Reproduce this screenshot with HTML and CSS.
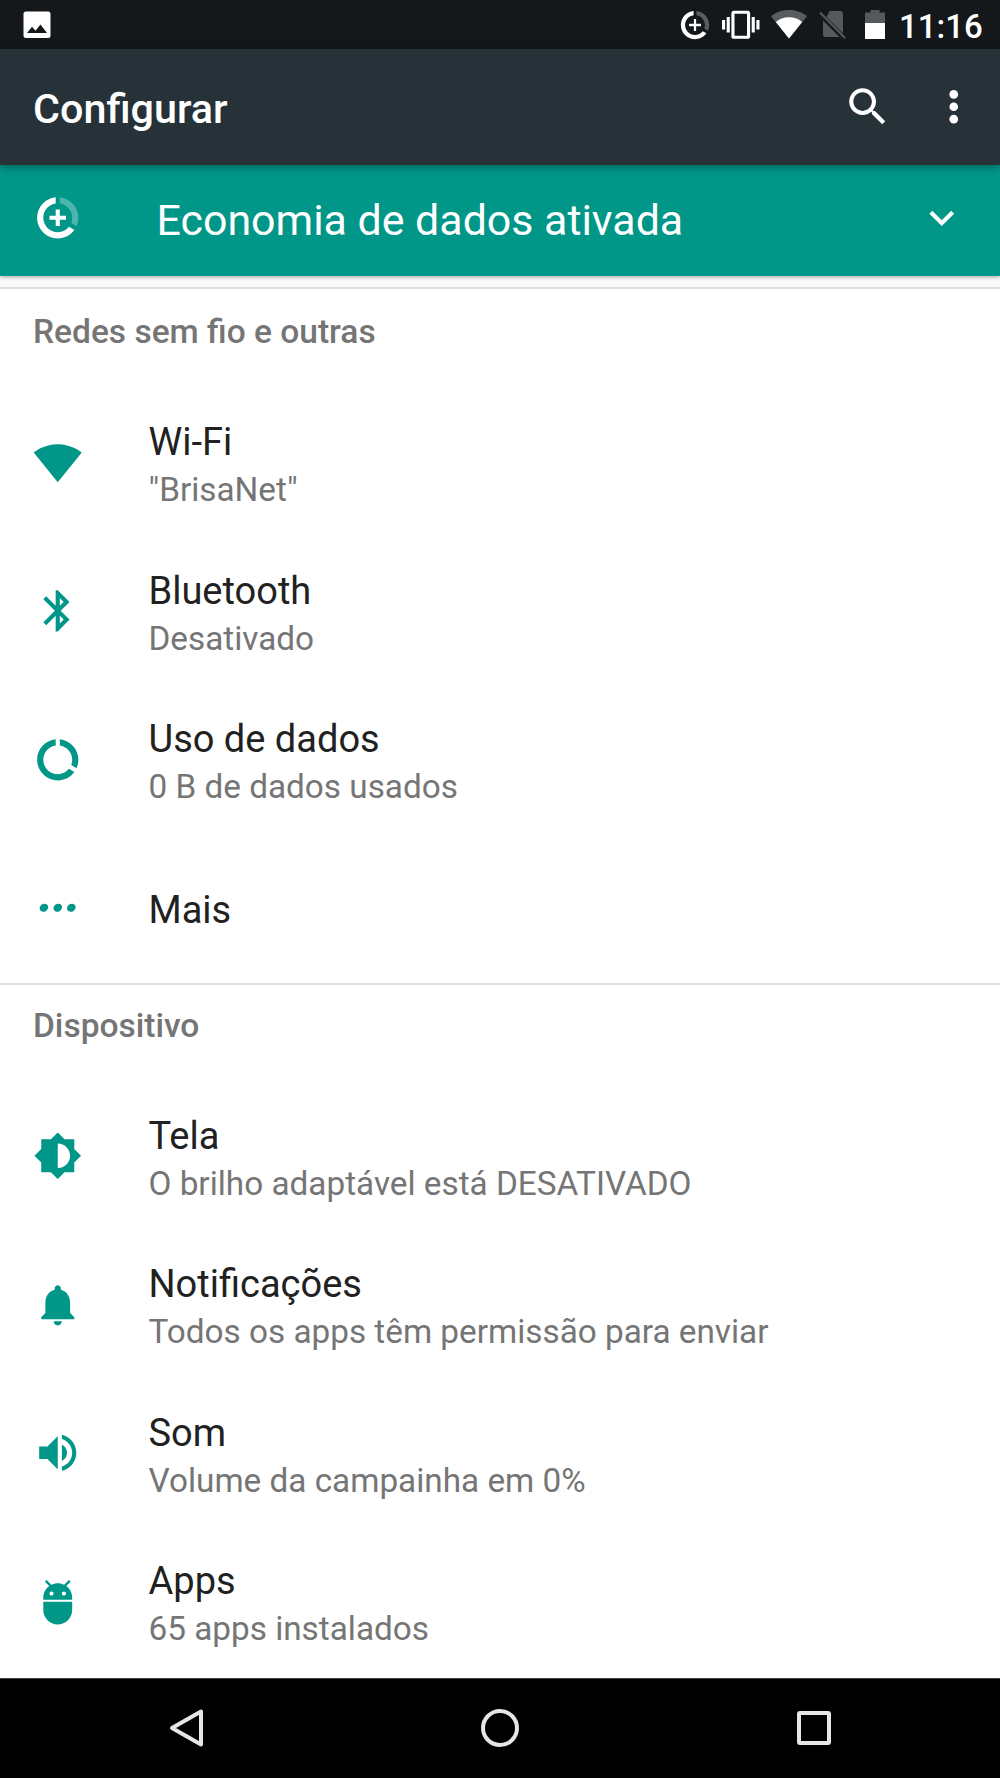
FILE: index.html
```html
<!DOCTYPE html>
<html lang="pt-BR">
<head>
    <meta charset="UTF-8">
    <meta name="viewport" content="width=device-width, initial-scale=1.0">
    <title>Configurar</title>
    <link rel="stylesheet" href="styles.css">
</head>
<body>
    <div class="status-bar">
        <svg class="st-image" width="28" height="28" viewBox="0 0 28 28"><path fill="#fff" fill-rule="evenodd" d="M3 0.500h22a2.500 2.500 0 0 1 2.500 2.500v21.500a2.500 2.500 0 0 1-2.500 2.500H3a2.500 2.500 0 0 1-2.500-2.500V3A2.500 2.500 0 0 1 3 0.500zM4 22h20l-6.500-8.500-5 6.300-3.500-4z"/></svg>
        <div class="status-icons">
            <svg class="st-saver" width="34" height="34" viewBox="0 0 24 24" fill="#fff">
                <path opacity=".3" d="M13 2.050v3.030c3.390.490 6 3.390 6 6.920 0 .900-.180 1.750-.480 2.540l2.600 1.530c.560-1.240.880-2.620.880-4.070 0-5.180-3.950-9.450-9-9.950z"/>
                <path d="M12 19c-3.870 0-7-3.130-7-7 0-3.530 2.610-6.430 6-6.920V2.050c-5.060.500-9 4.760-9 9.950 0 5.520 4.470 10 9.990 10 3.310 0 6.240-1.610 8.060-4.090l-2.600-1.530C16.170 17.980 14.210 19 12 19z"/>
                <path d="M11.200 7.800h1.600v3.400h3.400v1.600h-3.400v3.400h-1.600v-3.400H7.800v-1.600h3.400z"/>
            </svg>
            <svg class="st-vibrate" width="37.500" height="37.500" viewBox="0 0 24 24" fill="#fff"><path d="M0 15h2V9H0v6zm3 2h2V7H3v10zm19-8v6h2V9h-2zm-3 8h2V7h-2v10zM16.500 3h-9C6.670 3 6 3.670 6 4.500v15c0 .830.670 1.500 1.500 1.500h9c.830 0 1.500-.670 1.500-1.500v-15c0-.830-.670-1.500-1.500-1.500zM16 19H8V5h8v14z"/></svg>
            <svg class="st-wifi" width="36" height="29" viewBox="0 0 36 29" fill="#fff">
                <path opacity=".3" d="M18 28.500L0 6.200C4.500 2.400 10.700 0 18 0s13.500 2.400 18 6.200z"/>
                <path d="M18 28.500L4.800 12.100C8.300 9.200 12.800 7.300 18 7.300s9.700 1.900 13.200 4.800z"/>
            </svg>
            <svg class="st-sim" width="27" height="29" viewBox="0 0 27 29">
                <path fill="#56595b" d="M10.500 1h10.500a3 3 0 0 1 3 3v19.500L7.500 7zM4 10.500L20.500 27H6.500A2.500 2.500 0 0 1 4 24.500z"/>
                <path fill="none" stroke="#56595b" stroke-width="2.200" d="M1 2.500L26 28"/>
            </svg>
            <svg class="st-battery" width="20" height="29" viewBox="0 0 20 29">
                <path fill="#56595b" d="M0 2.500h5.500V0h9v2.500H20V13H0z"/>
                <path fill="#fff" d="M0 13h20v16H0z"/>
            </svg>
            <span class="clock">11:16</span>
        </div>
    </div>

    <header class="app-bar">
        <h1>Configurar</h1>
        <svg class="icon search" viewBox="0 0 24 24"><path d="M15.500 14h-.790l-.280-.270C15.410 12.590 16 11.110 16 9.500 16 5.910 13.090 3 9.500 3S3 5.910 3 9.500 5.910 16 9.500 16c1.610 0 3.090-.590 4.230-1.570l.270.280v.790l5 4.990L20.490 19l-4.990-5zm-6 0C7.010 14 5 11.990 5 9.500S7.010 5 9.500 5 14 7.010 14 9.500 11.990 14 9.500 14z"/></svg>
        <svg class="icon more" viewBox="0 0 24 24"><circle cx="12" cy="6" r="2.100"/><circle cx="12" cy="12" r="2.100"/><circle cx="12" cy="18" r="2.100"/></svg>
    </header>

    <div class="banner">
        <svg class="icon" viewBox="0 0 24 24">
            <path opacity=".3" d="M13 2.050v3.030c3.390.490 6 3.390 6 6.920 0 .900-.180 1.750-.480 2.540l2.600 1.530c.560-1.240.880-2.620.880-4.070 0-5.180-3.950-9.450-9-9.950z"/>
            <path d="M12 19c-3.870 0-7-3.130-7-7 0-3.530 2.610-6.430 6-6.920V2.050c-5.060.500-9 4.760-9 9.950 0 5.520 4.470 10 9.990 10 3.310 0 6.240-1.610 8.060-4.090l-2.600-1.530C16.170 17.980 14.210 19 12 19z"/>
            <path d="M11 8h2v3h3v2h-3v3h-2v-3H8v-2h3z"/>
        </svg>
        <span class="banner-text">Economia de dados ativada</span>
        <svg class="icon" viewBox="0 0 24 24"><path d="M16.590 8.590L12 13.170 7.410 8.590 6 10l6 6 6-6z"/></svg>
    </div>

    <main>
        <section>
            <h2>Redes sem fio e outras</h2>
            <div class="row">
                <svg class="icon" viewBox="0 0 24 24"><path d="M12 21.500L23.640 7c-.450-.340-4.930-4-11.640-4C5.280 3 .810 6.660.360 7z"/></svg>
                <div class="text">
                    <div class="title">Wi-Fi</div>
                    <div class="summary">"BrisaNet"</div>
                </div>
            </div>
            <div class="row">
                <svg class="icon" viewBox="0 0 24 24"><path d="M17.710 7.710L12 2h-1v7.590L6.410 5 5 6.410 10.590 12 5 17.590 6.410 19 11 14.410V22h1l5.710-5.710-4.300-4.290 4.300-4.290zM13 5.830l1.880 1.880L13 9.590V5.830zm1.880 10.460L13 18.170v-3.760l1.880 1.880z"/></svg>
                <div class="text">
                    <div class="title">Bluetooth</div>
                    <div class="summary">Desativado</div>
                </div>
            </div>
            <div class="row">
                <svg class="icon" viewBox="0 0 24 24"><path d="M13 2.050v3.030c3.390.490 6 3.390 6 6.920 0 .900-.180 1.750-.480 2.540l2.600 1.530c.560-1.240.880-2.620.880-4.070 0-5.180-3.950-9.450-9-9.950zM12 19c-3.870 0-7-3.130-7-7 0-3.530 2.610-6.430 6-6.920V2.050c-5.060.500-9 4.760-9 9.950 0 5.520 4.470 10 9.990 10 3.310 0 6.240-1.610 8.060-4.090l-2.600-1.530C16.170 17.980 14.210 19 12 19z"/></svg>
                <div class="text">
                    <div class="title">Uso de dados</div>
                    <div class="summary">0 B de dados usados</div>
                </div>
            </div>
            <div class="row">
                <svg class="icon" viewBox="0 0 24 24">
                    <ellipse cx="5.300" cy="12" rx="2.200" ry="1.850" transform="rotate(-35 5.300 12)"/>
                    <ellipse cx="12" cy="12" rx="2.200" ry="1.850" transform="rotate(-35 12 12)"/>
                    <ellipse cx="18.600" cy="12" rx="2.200" ry="1.850" transform="rotate(-35 18.600 12)"/>
                </svg>
                <div class="text">
                    <div class="title">Mais</div>
                </div>
            </div>
        </section>

        <section>
            <h2>Dispositivo</h2>
            <div class="row">
                <svg class="icon" viewBox="0 0 24 24"><path d="M20 15.310L23.310 12 20 8.690V4h-4.690L12 .690 8.690 4H4v4.690L.690 12 4 15.310V20h4.690L12 23.310 15.310 20H20v-4.690zM12 18V6c3.310 0 6 2.690 6 6s-2.690 6-6 6z"/></svg>
                <div class="text">
                    <div class="title">Tela</div>
                    <div class="summary">O brilho adaptável está DESATIVADO</div>
                </div>
            </div>
            <div class="row">
                <svg class="icon" viewBox="0 0 24 24"><path d="M12 22c1.100 0 2-.900 2-2h-4c0 1.100.890 2 2 2zm6-6v-5c0-3.070-1.640-5.640-4.500-6.320V4c0-.830-.670-1.500-1.500-1.500s-1.500.670-1.500 1.500v.680C7.630 5.360 6 7.920 6 11v5l-2 2v1h16v-1l-2-2z"/></svg>
                <div class="text">
                    <div class="title">Notificações</div>
                    <div class="summary">Todos os apps têm permissão para enviar</div>
                </div>
            </div>
            <div class="row">
                <svg class="icon" viewBox="0 0 24 24"><path d="M3 9v6h4l5 5V4L7 9H3zm13.500 3c0-1.770-1.020-3.290-2.500-4.030v8.050c1.480-.730 2.500-2.250 2.500-4.020zM14 3.230v2.060c2.890.860 5 3.540 5 6.710s-2.110 5.850-5 6.710v2.060c4.010-.910 7-4.490 7-8.770s-2.990-7.860-7-8.770z"/></svg>
                <div class="text">
                    <div class="title">Som</div>
                    <div class="summary">Volume da campainha em 0%</div>
                </div>
            </div>
            <div class="row">
                <svg class="icon" viewBox="0 0 24 24"><path d="M5 16c0 3.870 3.130 7 7 7s7-3.130 7-7v-4H5v4zM16.120 4.370l2.100-2.100-.820-.830-2.300 2.310C14.160 3.280 13.120 3 12 3s-2.160.280-3.090.750L6.600 1.440l-.820.830 2.100 2.100C6.140 5.640 5 7.680 5 10v1h14v-1c0-2.320-1.140-4.360-2.880-5.630zM9 9c-.550 0-1-.450-1-1s.450-1 1-1 1 .450 1 1-.450 1-1 1zm6 0c-.550 0-1-.450-1-1s.450-1 1-1 1 .450 1 1-.450 1-1 1z"/></svg>
                <div class="text">
                    <div class="title">Apps</div>
                    <div class="summary">65 apps instalados</div>
                </div>
            </div>
        </section>
    </main>

    <nav class="nav-bar">
        <svg width="40" height="40" viewBox="0 0 40 40"><path d="M35 3.500v33L6 20z"/></svg>
        <svg width="40" height="40" viewBox="0 0 40 40"><circle cx="20" cy="20" r="17"/></svg>
        <svg width="40" height="40" viewBox="0 0 40 40"><rect x="5" y="5" width="30" height="30" rx="1"/></svg>
    </nav>
</body>
</html>
```
FILE: styles.css
```css
* {
    box-sizing: border-box;
}
body {
    margin: 0;
    height: 1778px;
    display: flex;
    flex-direction: column;
    overflow: hidden;
    font-family: Roboto, sans-serif;
    background-color: #fafafa;
}
svg {
    display: block;
    flex: none;
}
h1, h2 {
    margin: 0;
    font-weight: 500;
}
.icon {
    width: 49.5px;
    height: 49.5px;
    fill: #009688;
}

/* status bar */
.status-bar {
    flex: none;
    height: 49px;
    padding: 0 17px 0 23px;
    display: flex;
    align-items: center;
    justify-content: space-between;
    background-color: #14181b;
}
.status-icons {
    display: flex;
    align-items: center;
}
.st-vibrate {
    margin-left: 10.5px;
}
.st-wifi {
    margin-left: 11.5px;
}
.st-sim {
    margin-left: 12px;
}
.st-battery {
    margin-left: 18.5px;
}
.clock {
    width: 84px;
    margin-left: 14.5px;
    padding-top: 4px;
    color: #fff;
    font-size: 33px;
    font-weight: 500;
    line-height: 40px;
}

/* app bar */
.app-bar {
    position: relative;
    flex: none;
    height: 116px;
    padding: 0 22px 0 33px;
    display: flex;
    align-items: center;
    background-color: #263238;
    box-shadow: 0 2px 8px rgba(0, 0, 0, 0.35);
}
.app-bar h1 {
    flex: 1;
    padding-top: 4px;
    color: #fff;
    font-size: 41.3px;
    line-height: 48px;
}
.app-bar .icon {
    fill: #fff;
}
.more {
    margin-left: 36.5px;
}

/* data saver banner */
.banner {
    position: relative;
    flex: none;
    height: 111px;
    padding: 0 34px 5px 33px;
    display: flex;
    align-items: center;
    background-color: #009688;
    box-shadow: 0 1px 4px rgba(0, 0, 0, 0.35);
}
.app-bar {
    z-index: 1;
}
.banner .icon {
    fill: #fff;
}
.banner-text {
    flex: 1;
    margin-left: 74px;
    padding-top: 3px;
    color: #fff;
    font-size: 42.9px;
    line-height: 50px;
}

/* settings list */
main {
    flex: 1;
    min-height: 0;
    padding-top: 11px;
}
section {
    padding-bottom: 1px;
    background-color: #fff;
    border-top: 2px solid #dfdfdf;
}
h2 {
    height: 99px;
    padding: 19px 33px 0;
    color: #757575;
    font-size: 33.5px;
    line-height: 48px;
}
section + section h2 {
    height: 96.5px;
    padding-top: 17px;
}
.row {
    height: 148.5px;
    padding: 0 33px;
    display: flex;
    align-items: center;
}
.text {
    margin-left: 66px;
    padding-top: 5px;
}
.title {
    color: #212121;
    font-size: 38px;
    line-height: 50px;
}
.summary {
    color: #757575;
    font-size: 33.3px;
    line-height: 45px;
}

/* navigation buttons */
.nav-bar {
    position: relative;
    flex: none;
    height: 100px;
    padding: 0 166px 1px;
    display: flex;
    align-items: center;
    justify-content: space-between;
    background-color: #000;
    border-top: 1px solid #444;
}
.nav-bar svg {
    fill: none;
    stroke: #e6e6e6;
    stroke-width: 4;
    stroke-linejoin: round;
}
```
